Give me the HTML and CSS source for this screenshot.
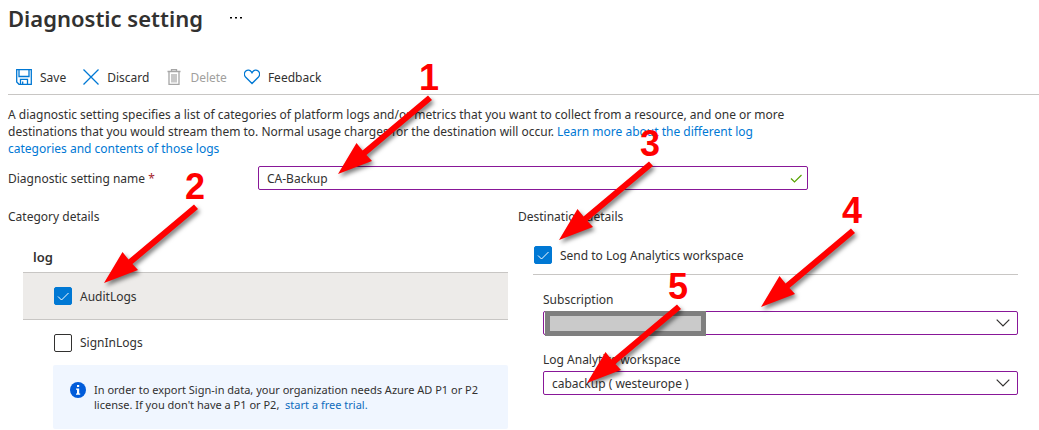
FILE: index.html
```html
<!DOCTYPE html>
<html lang="en">
<head>
<meta charset="utf-8">
<title>Diagnostic setting</title>
<link rel="stylesheet" href="styles.css">
</head>
<body>
<svg class="defs" aria-hidden="true">
  <symbol id="arrow" viewBox="0 0 104 92">
    <path d="M2 82 20.500 51 26.500 58.500 92 3.500 96 8 30.500 63 36 69Z"/>
  </symbol>
  <symbol id="check" viewBox="0 0 18 18"><path d="M4 9.500 7.500 13 14.500 6"/></symbol>
  <symbol id="chevron" viewBox="0 0 14 8"><path d="M.7.700 7 7 13.300.7"/></symbol>
</svg>
<main class="page">
  <header class="title-bar">
    <h1 class="title">Diagnostic setting</h1>
    <button class="more" type="button" aria-label="More">
      <svg width="12" height="2" viewBox="0 0 12 2"><path d="M0 0h2v1.500H0zM5 0h2v1.500H5zM10 0h2v1.500h-2z"/></svg>
    </button>
  </header>
  <div class="toolbar">
    <button class="command" type="button">
      <svg class="icon" viewBox="0 0 16 16"><path d="M.7.700h14.600v14.600H3L.7 13zM3 .7v6.800h10V.7M4.500 15.300v-5h7v5M6.700 15v-2.500"/></svg>
      Save
    </button>
    <button class="command" type="button">
      <svg class="icon" viewBox="0 0 16 16"><path d="M.5.500l15 15M15.500.500l-15 15"/></svg>
      Discard
    </button>
    <button class="command command-disabled" type="button" disabled>
      <svg class="icon" viewBox="0 0 16 16"><path d="M1.500 2.500h13M5.500 2.200V.6h5v1.600M3 2.500v12.800h10V2.500"/><path class="fill" d="M5 5h6v8.500H5z"/></svg>
      Delete
    </button>
    <button class="command" type="button">
      <svg class="icon" viewBox="0 0 16 16"><path d="M8 14.500 1.500 8C-.3 6 .2 3.300 1.800 2 3.600.6 6 1 7.200 2.700L8 3.800l.8-1.100C10 1 12.400.6 14.200 2c1.600 1.300 2.100 4 .3 6z"/></svg>
      Feedback
    </button>
  </div>
  <p class="intro">A diagnostic setting specifies a list of categories of platform logs and/or metrics that you want to collect from a resource, and one or more destinations that you would stream them to. Normal usage charges for the destination will occur. <a class="link" href="#">Learn more about the different log categories and contents of those logs</a></p>
  <div class="name-row">
    <label class="name-label" for="name">Diagnostic setting name <span class="required">*</span></label>
    <div class="field">
      <input class="control" id="name" type="text" value="CA-Backup">
      <svg class="field-icon valid" width="18" height="18"><use href="#check"/></svg>
    </div>
  </div>
  <div class="columns">
    <section>
      <h2 class="section-title">Category details</h2>
      <div class="categories">
        <h3 class="group-title">log</h3>
        <label class="category category-selected">
          <span class="tick"><input class="box" type="checkbox" checked><svg class="mark" viewBox="0 0 18 18"><use href="#check"/></svg></span>
          AuditLogs
        </label>
        <label class="category">
          <span class="tick"><input class="box" type="checkbox"></span>
          SignInLogs
        </label>
        <div class="notice">
          <svg class="info" viewBox="0 0 16 16"><circle cx="8" cy="8" r="8"/><path d="M7 3h2.200v2H7zM6 6.500h3.200v5h1v1.300H6v-1.300h1V7.800H6z"/></svg>
          <p class="notice-text">In order to export Sign-in data, your organization needs Azure AD P1 or P2 license. If you don't have a P1 or P2, &nbsp;<a class="link" href="#">start a free trial.</a></p>
        </div>
      </div>
    </section>
    <section>
      <h2 class="section-title">Destination details</h2>
      <div class="destinations">
        <label class="destination">
          <span class="tick"><input class="box" type="checkbox" checked><svg class="mark" viewBox="0 0 18 18"><use href="#check"/></svg></span>
          Send to Log Analytics workspace
        </label>
        <div class="fields">
          <label class="field-label" for="subscription">Subscription</label>
          <div class="field">
            <select class="control" id="subscription"><option></option></select>
            <span class="redaction"></span>
            <svg class="field-icon" width="14" height="8"><use href="#chevron"/></svg>
          </div>
          <label class="field-label" for="workspace">Log Analytics workspace</label>
          <div class="field">
            <select class="control" id="workspace"><option>cabackup ( westeurope )</option></select>
            <svg class="field-icon" width="14" height="8"><use href="#chevron"/></svg>
          </div>
        </div>
      </div>
    </section>
  </div>
  <div class="callout callout-1"><span class="number">1</span><svg class="arrow"><use href="#arrow"/></svg></div>
  <div class="callout callout-2"><span class="number">2</span><svg class="arrow"><use href="#arrow"/></svg></div>
  <div class="callout callout-3"><span class="number">3</span><svg class="arrow"><use href="#arrow"/></svg></div>
  <div class="callout callout-4"><span class="number">4</span><svg class="arrow"><use href="#arrow"/></svg></div>
  <div class="callout callout-5"><span class="number">5</span><svg class="arrow"><use href="#arrow"/></svg></div>
</main>
</body>
</html>
```
FILE: styles.css
```css
* { box-sizing: border-box; }
body {
  margin: 0;
  background: #fff;
  color: #323130;
  font: 12px/17px "Noto Sans", "Open Sans", sans-serif;
}
h1, h2, h3, p { margin: 0; }
button, input, select { font: inherit; color: inherit; }
.defs { position: absolute; width: 0; height: 0; }
.page { position: relative; padding-left: 8px; }
.title-bar { display: flex; align-items: center; gap: 27px; height: 36px; }
.title { font-size: 22px; line-height: 36px; font-weight: 600; }
.more { display: flex; padding: 0; border: 0; background: none; }
.toolbar {
  display: flex;
  align-items: center;
  gap: 17px;
  margin-top: 24px;
  padding-left: 8px;
  height: 35px;
  border-bottom: 1px solid #c8c6c4;
}
.command { display: flex; align-items: center; gap: 8px; padding: 0; border: 0; background: none; }
.command-disabled { color: #a19f9d; }
.icon { width: 16px; height: 16px; fill: none; stroke: #0078d4; stroke-width: 1.3; }
.command-disabled .icon { stroke: #a6a6a6; }
.fill { fill: #c8c8c8; stroke: none; }
.intro { max-width: 800px; margin-top: 11px; }
.link { color: #0f6cbd; text-decoration: none; }
.intro .link { color: #0078d4; }
.name-row { display: grid; grid-template-columns: 250px minmax(0, 550px); align-items: center; margin-top: 9px; }
.required { color: #a4262c; }
.field { position: relative; display: flex; }
.control {
  appearance: none;
  width: 100%;
  height: 24px;
  padding: 0 8px;
  border: 1px solid #881798;
  border-radius: 2px;
  background: #fff;
  outline: 0;
}
.field-icon { position: absolute; right: 8px; top: 8px; fill: none; stroke: #323130; stroke-width: 1.2; pointer-events: none; }
.valid { right: 3px; top: 3px; stroke: #57a300; }
.columns { display: grid; grid-template-columns: 1fr 1fr; gap: 10px; margin: 18px 21px 0 0; }
.section-title { font-size: 12px; font-weight: 400; }
.categories { margin: 24px 0 0 15px; }
.group-title { padding: 0 10px 6px; font-size: 13px; font-weight: 600; }
.category { display: flex; align-items: center; gap: 8px; height: 45px; padding-left: 31px; }
.category-selected { height: 48px; background: #edebe9; border: solid #c8c6c4; border-width: 1px 0; }
.tick { position: relative; display: flex; width: 18px; height: 18px; }
.box { appearance: none; width: 18px; height: 18px; margin: 0; border: 1px solid #323130; border-radius: 2px; background: #fff; }
.box:checked { border-color: #0078d4; background: #0078d4; }
.mark { position: absolute; inset: 0; fill: none; stroke: #fff; pointer-events: none; }
.notice { display: flex; gap: 8px; margin-left: 30px; padding: 17px 12px 17px 17px; border-radius: 2px; background: #f0f6ff; font-size: 11px; line-height: 15px; }
.info { flex: none; width: 16px; height: 16px; fill: #015cda; }
.info path { fill: #fff; }
.destinations { margin: 21px 0 0 15px; }
.destination { display: flex; align-items: center; gap: 8px; height: 29px; padding: 0 1px 10px; border-bottom: 1px solid #c8c6c4; }
.fields { padding: 16px 0 0 10px; }
.field-label { display: block; margin-bottom: 3px; }
.field + .field-label { margin-top: 16px; }
.redaction { position: absolute; left: 2px; top: 0; width: 161px; height: 25px; border: 5px solid #7f7f7f; background: #cacaca; pointer-events: none; }
.callout { position: absolute; width: 104px; pointer-events: none; }
.number { display: block; padding-right: 1px; color: #f00; font: bold 36px/28px "Liberation Sans", Arial, sans-serif; text-align: right; }
.arrow { display: block; width: 104px; height: 92px; fill: #f00; filter: drop-shadow(2px 3px 2px rgb(0 0 0 / 50%)); }
.callout-1 { left: 336px; top: 64px; }
.callout-2 { left: 102px; top: 173px; }
.callout-3 { left: 557px; top: 130px; }
.callout-4 { left: 759px; top: 197px; }
.callout-5 { left: 585px; top: 273px; }
```
